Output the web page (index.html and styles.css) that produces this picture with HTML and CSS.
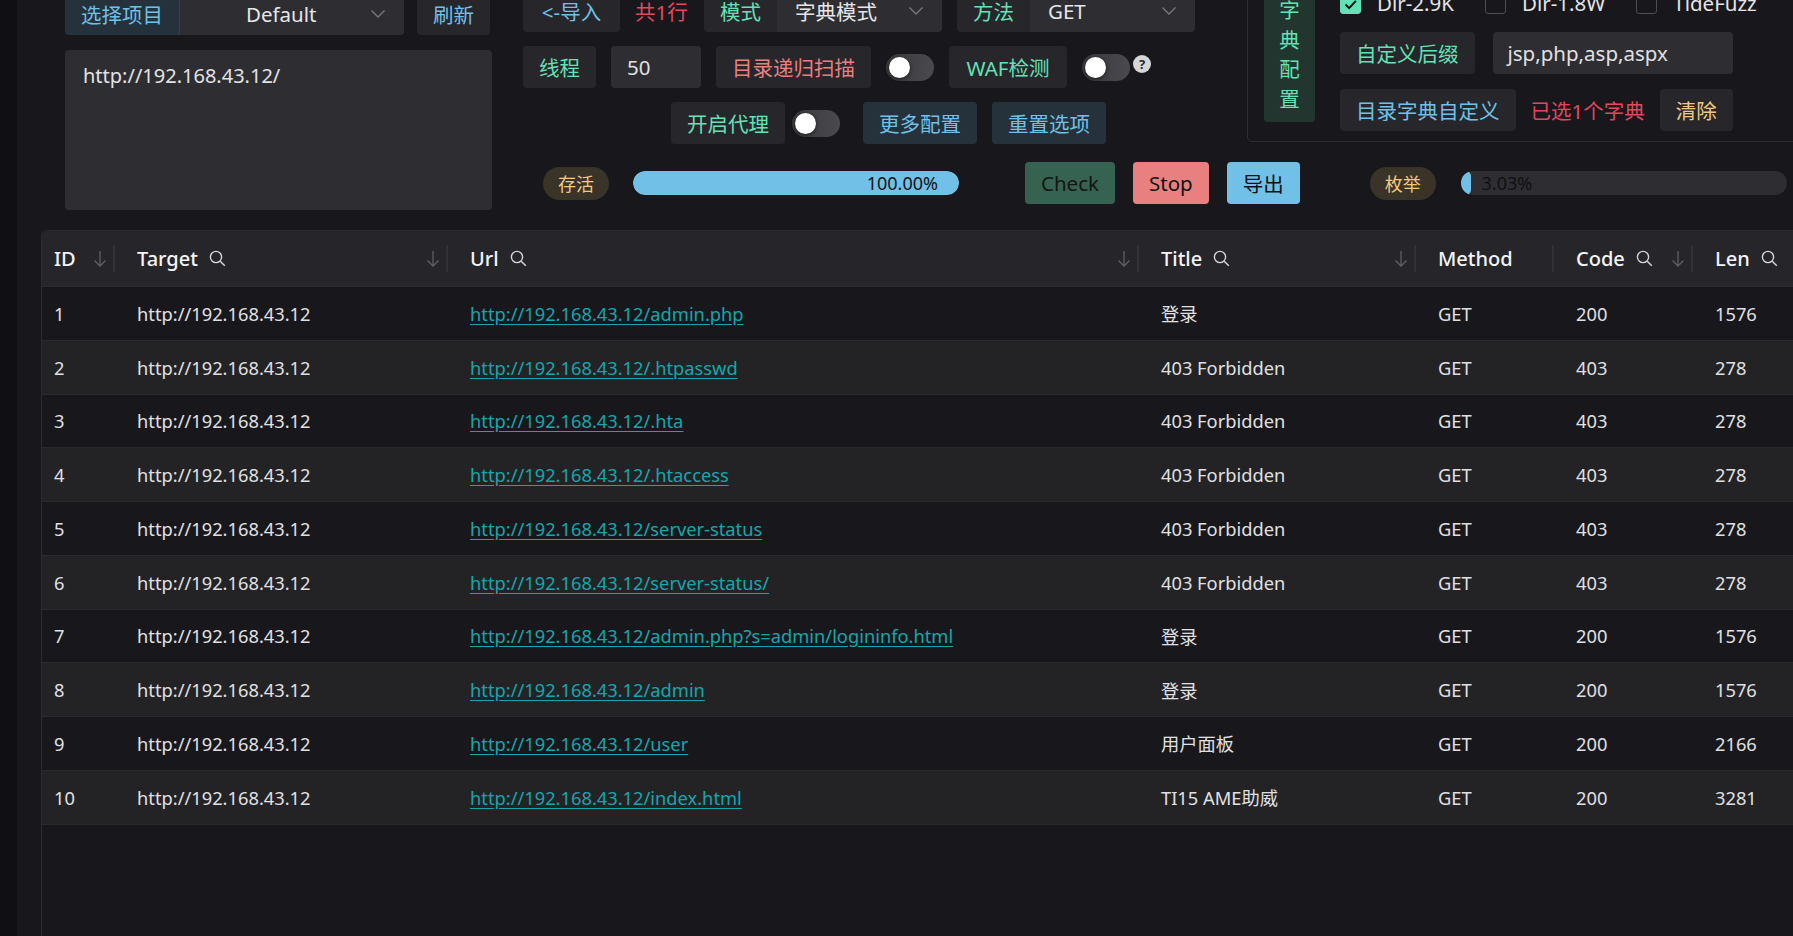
FILE: index.html
```html
<!DOCTYPE html>
<html lang="zh-CN">
<head>
<meta charset="utf-8">
<title>Dir Scan</title>
<link rel="stylesheet" href="styles.css">
</head>
<body>
<div class="app">
  <div class="strip"></div>
  <div class="main">
    <div class="top">
      <div class="left-col">
        <div class="ctl-row">
          <div class="group">
            <span class="btn tert-blue grp-l">选择项目</span>
            <div class="select sel-default grp-r"><span>Default</span><svg class="chev" width="16" height="10" viewBox="0 0 16 10"><path d="M1.5 1.5l6.5 6.5 6.5-6.5" fill="none" stroke="#77777c" stroke-width="1.4"/></svg></div>
          </div>
          <span class="btn sec c-blue">刷新</span>
        </div>
        <div class="textarea">http://192.168.43.12/</div>
      </div>

      <div class="right-area">
        <div class="upper">
          <div class="mid-col">
            <div class="row">
              <span class="btn sec c-blue btn-import">&lt;-导入</span>
              <span class="count count-rows c-rose">共1行</span>
              <div class="group">
                <span class="btn sec c-green grp-l">模式</span>
                <div class="select sel-mid grp-r"><span>字典模式</span><svg class="chev" width="16" height="10" viewBox="0 0 16 10"><path d="M1.5 1.5l6.5 6.5 6.5-6.5" fill="none" stroke="#77777c" stroke-width="1.4"/></svg></div>
              </div>
              <div class="group">
                <span class="btn sec c-green grp-l">方法</span>
                <div class="select sel-mid grp-r"><span>GET</span><svg class="chev" width="16" height="10" viewBox="0 0 16 10"><path d="M1.5 1.5l6.5 6.5 6.5-6.5" fill="none" stroke="#77777c" stroke-width="1.4"/></svg></div>
              </div>
            </div>
            <div class="row">
              <span class="btn sec c-green">线程</span>
              <div class="input-num">50</div>
              <span class="btn sec c-red">目录递归扫描</span>
              <div class="switch"><span class="knob"></span></div>
              <span class="btn sec c-green btn-waf">WAF检测</span>
              <div class="switch"><span class="knob"></span></div>
              <span class="help">?</span>
            </div>
            <div class="row r3">
              <span class="btn sec c-green">开启代理</span>
              <div class="switch sw-proxy"><span class="knob"></span></div>
              <span class="btn tert-blue">更多配置</span>
              <span class="btn tert-blue">重置选项</span>
            </div>
          </div>

          <div class="dict-box">
            <div class="dict-tag"><span>字</span><span>典</span><span>配</span><span>置</span></div>
            <div class="dict-content">
              <div class="cb-row">
                <label class="cb"><span class="cbox on"><svg width="21" height="21" viewBox="0 0 21 21"><path d="M5 10.5l4 4 7.5-8" fill="none" stroke="#111" stroke-width="2.2"/></svg></span>Dir-2.9K</label>
                <label class="cb"><span class="cbox"></span>Dir-1.8W</label>
                <label class="cb"><span class="cbox"></span>TideFuzz</label>
              </div>
              <div class="row gap18">
                <span class="btn sec c-green">自定义后缀</span>
                <div class="input-ext">jsp,php,asp,aspx</div>
              </div>
              <div class="row">
                <span class="btn sec c-blue">目录字典自定义</span>
                <span class="count c-rose">已选1个字典</span>
                <span class="btn sec c-yellow">清除</span>
              </div>
            </div>
          </div>
        </div>

        <div class="status-row">
          <span class="pill">存活</span>
          <div class="prog"><div class="prog-fill full">100.00%</div></div>
          <span class="btn btn-check">Check</span>
          <span class="btn btn-stop">Stop</span>
          <span class="btn btn-export">导出</span>
          <span class="pill pill-enum">枚举</span>
          <div class="prog prog-enum"><div class="prog-fill" style="width:3.03%"></div><span class="prog-text">3.03%</span></div>
        </div>
      </div>
    </div>

    <div class="table">
      <div class="thead">
        <div class="th sep">ID<svg class="sort" width="14" height="18" viewBox="0 0 14 18"><path d="M7 1v15M1.5 10.5L7 16l5.5-5.5" fill="none" stroke="#5e5e63" stroke-width="1.3"/></svg></div>
        <div class="th sep">Target<svg class="search" width="17" height="17" viewBox="0 0 17 17"><circle cx="7" cy="7" r="5.6" fill="none" stroke="#d4d4d6" stroke-width="1.4"/><path d="M11.2 11.2l4.6 4.6" stroke="#d4d4d6" stroke-width="1.5"/></svg><svg class="sort" width="14" height="18" viewBox="0 0 14 18"><path d="M7 1v15M1.5 10.5L7 16l5.5-5.5" fill="none" stroke="#5e5e63" stroke-width="1.3"/></svg></div>
        <div class="th sep">Url<svg class="search" width="17" height="17" viewBox="0 0 17 17"><circle cx="7" cy="7" r="5.6" fill="none" stroke="#d4d4d6" stroke-width="1.4"/><path d="M11.2 11.2l4.6 4.6" stroke="#d4d4d6" stroke-width="1.5"/></svg><svg class="sort" width="14" height="18" viewBox="0 0 14 18"><path d="M7 1v15M1.5 10.5L7 16l5.5-5.5" fill="none" stroke="#5e5e63" stroke-width="1.3"/></svg></div>
        <div class="th sep">Title<svg class="search" width="17" height="17" viewBox="0 0 17 17"><circle cx="7" cy="7" r="5.6" fill="none" stroke="#d4d4d6" stroke-width="1.4"/><path d="M11.2 11.2l4.6 4.6" stroke="#d4d4d6" stroke-width="1.5"/></svg><svg class="sort" width="14" height="18" viewBox="0 0 14 18"><path d="M7 1v15M1.5 10.5L7 16l5.5-5.5" fill="none" stroke="#5e5e63" stroke-width="1.3"/></svg></div>
        <div class="th sep">Method</div>
        <div class="th sep">Code<svg class="search" width="17" height="17" viewBox="0 0 17 17"><circle cx="7" cy="7" r="5.6" fill="none" stroke="#d4d4d6" stroke-width="1.4"/><path d="M11.2 11.2l4.6 4.6" stroke="#d4d4d6" stroke-width="1.5"/></svg><svg class="sort" width="14" height="18" viewBox="0 0 14 18"><path d="M7 1v15M1.5 10.5L7 16l5.5-5.5" fill="none" stroke="#5e5e63" stroke-width="1.3"/></svg></div>
        <div class="th">Len<svg class="search" width="17" height="17" viewBox="0 0 17 17"><circle cx="7" cy="7" r="5.6" fill="none" stroke="#d4d4d6" stroke-width="1.4"/><path d="M11.2 11.2l4.6 4.6" stroke="#d4d4d6" stroke-width="1.5"/></svg></div>
      </div>
      <div class="tbody">
        <div class="tr"><div class="td">1</div><div class="td">http://192.168.43.12</div><div class="td"><a href="#">http://192.168.43.12/admin.php</a></div><div class="td">登录</div><div class="td">GET</div><div class="td">200</div><div class="td">1576</div></div>
        <div class="tr"><div class="td">2</div><div class="td">http://192.168.43.12</div><div class="td"><a href="#">http://192.168.43.12/.htpasswd</a></div><div class="td">403 Forbidden</div><div class="td">GET</div><div class="td">403</div><div class="td">278</div></div>
        <div class="tr"><div class="td">3</div><div class="td">http://192.168.43.12</div><div class="td"><a href="#">http://192.168.43.12/.hta</a></div><div class="td">403 Forbidden</div><div class="td">GET</div><div class="td">403</div><div class="td">278</div></div>
        <div class="tr"><div class="td">4</div><div class="td">http://192.168.43.12</div><div class="td"><a href="#">http://192.168.43.12/.htaccess</a></div><div class="td">403 Forbidden</div><div class="td">GET</div><div class="td">403</div><div class="td">278</div></div>
        <div class="tr"><div class="td">5</div><div class="td">http://192.168.43.12</div><div class="td"><a href="#">http://192.168.43.12/server-status</a></div><div class="td">403 Forbidden</div><div class="td">GET</div><div class="td">403</div><div class="td">278</div></div>
        <div class="tr"><div class="td">6</div><div class="td">http://192.168.43.12</div><div class="td"><a href="#">http://192.168.43.12/server-status/</a></div><div class="td">403 Forbidden</div><div class="td">GET</div><div class="td">403</div><div class="td">278</div></div>
        <div class="tr"><div class="td">7</div><div class="td">http://192.168.43.12</div><div class="td"><a href="#">http://192.168.43.12/admin.php?s=admin/logininfo.html</a></div><div class="td">登录</div><div class="td">GET</div><div class="td">200</div><div class="td">1576</div></div>
        <div class="tr"><div class="td">8</div><div class="td">http://192.168.43.12</div><div class="td"><a href="#">http://192.168.43.12/admin</a></div><div class="td">登录</div><div class="td">GET</div><div class="td">200</div><div class="td">1576</div></div>
        <div class="tr"><div class="td">9</div><div class="td">http://192.168.43.12</div><div class="td"><a href="#">http://192.168.43.12/user</a></div><div class="td">用户面板</div><div class="td">GET</div><div class="td">200</div><div class="td">2166</div></div>
        <div class="tr"><div class="td">10</div><div class="td">http://192.168.43.12</div><div class="td"><a href="#">http://192.168.43.12/index.html</a></div><div class="td">TI15 AME助威</div><div class="td">GET</div><div class="td">200</div><div class="td">3281</div></div>
      </div>
    </div>
  </div>
</div>
</body>
</html>
```

FILE: styles.css
```css
html, body {
  margin: 0;
  height: 100%;
  overflow: hidden;
  background: #101014;
}
body {
  font-family: "Noto Sans", "Noto Sans CJK SC", sans-serif;
  color: #e0e0e2;
}
.app {
  display: flex;
  height: 936px;
}
.strip {
  width: 17px;
  flex: none;
  background: #101014;
}
.main {
  flex: 1;
  min-width: 0;
  background: #18181c;
  padding-left: 24px;
  overflow: hidden;
}

/* ---------- top controls ---------- */
.top {
  display: flex;
  margin-top: -10px;
  padding-left: 24px;
  height: 220px;
}
.left-col {
  width: 427px;
  flex: none;
  padding-top: 3px;
  display: flex;
  flex-direction: column;
  gap: 15px;
}
.ctl-row {
  display: flex;
  align-items: center;
  gap: 13px;
}
.group {
  display: flex;
  flex: none;
}
.btn {
  height: 42px;
  padding: 0 16px;
  box-sizing: border-box;
  border-radius: 4px;
  font-size: 20.5px;
  display: inline-flex;
  align-items: center;
  justify-content: center;
  white-space: nowrap;
  flex: none;
}
.sec { background: #27272b; }
.tert-blue { background: #25323c; color: #70c0e8; }
.c-blue { color: #70c0e8; }
.c-green { color: #63e2b7; }
.c-red { color: #e88080; }
.c-yellow { color: #f2c97d; }
.c-rose { color: #e2475e; }
.grp-l { border-radius: 4px 0 0 4px; }
.grp-r { border-radius: 0 4px 4px 0; }
.btn-import { width: 97px; }
.btn-waf { width: 118px; }

.select {
  height: 42px;
  box-sizing: border-box;
  background: #2e2e32;
  display: flex;
  align-items: center;
  font-size: 20.5px;
  color: #e6e6e8;
  white-space: nowrap;
}
.select .chev { margin-left: auto; flex: none; }
.sel-default {
  width: 225px;
  padding-left: 66px;
  padding-right: 18px;
  border-left: 1px solid #33404a;
}
.sel-mid {
  width: 165px;
  padding-left: 18px;
  padding-right: 18px;
}
.textarea {
  height: 160px;
  box-sizing: border-box;
  background: #2e2e32;
  border-radius: 4px;
  padding: 11px 18px;
  font-size: 20px;
  line-height: 30px;
  color: #e2e2e4;
}

.right-area {
  margin-left: 31px;
  flex: 1;
  min-width: 0;
  display: flex;
  flex-direction: column;
}
.upper {
  display: flex;
  height: 154px;
}
.mid-col {
  width: 724px;
  flex: none;
  display: flex;
  flex-direction: column;
  gap: 14px;
}
.row {
  display: flex;
  align-items: center;
  gap: 15px;
  height: 42px;
}
.gap18 { gap: 18px; }
.count {
  font-size: 20.5px;
  white-space: nowrap;
  flex: none;
}
.count-rows {
  width: 54px;
}
.input-num {
  width: 90px;
  height: 42px;
  box-sizing: border-box;
  background: #2e2e32;
  border-radius: 4px;
  padding-left: 16px;
  display: flex;
  align-items: center;
  font-size: 20.5px;
  color: #e0e0e2;
  flex: none;
}
.input-ext {
  width: 240px;
  height: 42px;
  box-sizing: border-box;
  background: #2e2e32;
  border-radius: 4px;
  padding-left: 15px;
  display: flex;
  align-items: center;
  font-size: 20.5px;
  color: #e0e0e2;
  flex: none;
}
.switch {
  width: 48px;
  height: 27px;
  box-sizing: border-box;
  border-radius: 14px;
  background: linear-gradient(90deg, #3a3a3e, #4a4a4e);
  display: flex;
  align-items: center;
  padding-left: 3px;
  flex: none;
}
.knob {
  width: 21px;
  height: 21px;
  border-radius: 50%;
  background: #fff;
  box-shadow: 0 1px 4px rgba(0, 0, 0, 0.6);
}
.help {
  width: 18px;
  height: 18px;
  border-radius: 50%;
  background: #d6d6d8;
  color: #26262a;
  font-size: 13px;
  font-weight: bold;
  display: flex;
  align-items: center;
  justify-content: center;
  align-self: flex-start;
  margin-top: 9px;
  margin-left: -12px;
  flex: none;
  line-height: 1;
}
.r3 {
  padding-left: 148px;
  gap: 0;
}
.r3 .sw-proxy { margin: 0 23px 0 7px; }
.r3 .tert-blue + .tert-blue { margin-left: 15px; }

/* dictionary box */
.dict-box {
  margin-top: -2px;
  width: 620px;
  flex: none;
  height: 154px;
  box-sizing: border-box;
  border: 1px solid #2e2e33;
  border-radius: 5px;
  padding: 0 0 10px 16px;
  display: flex;
  align-items: flex-end;
}
.dict-tag {
  width: 51px;
  flex: none;
  background: #22362f;
  color: #63e2b7;
  border-radius: 4px;
  font-size: 20.5px;
  line-height: 29.5px;
  padding: 4px 0 8px;
  margin: 0 25px 9px 0;
  display: flex;
  flex-direction: column;
  align-items: center;
}
.dict-content {
  display: flex;
  flex-direction: column;
  gap: 15px;
}
.cb-row {
  height: 28px;
  display: flex;
  align-items: center;
  gap: 31px;
}
.cb {
  display: flex;
  align-items: center;
  gap: 16px;
  font-size: 20.5px;
  color: #e4e4e6;
  white-space: nowrap;
}
.cbox {
  width: 21px;
  height: 21px;
  box-sizing: border-box;
  border: 1px solid #4c4c51;
  border-radius: 3px;
  display: flex;
}
.cbox.on {
  background: #63e2b7;
  border-color: #63e2b7;
}

/* status row */
.status-row {
  margin-top: 18px;
  height: 42px;
  display: flex;
  align-items: center;
  padding-left: 20px;
}
.pill {
  width: 66px;
  height: 33px;
  border-radius: 17px;
  background: #3a3327;
  color: #f2c97d;
  font-size: 18px;
  display: flex;
  align-items: center;
  justify-content: center;
  flex: none;
  margin-right: 24px;
}
.prog {
  width: 326px;
  height: 24px;
  border-radius: 12px;
  background: #2e2e32;
  display: flex;
  align-items: center;
  overflow: hidden;
  flex: none;
  margin-right: 66px;
}
.prog-fill {
  height: 100%;
  background: #70c0e8;
  border-radius: 12px;
  flex: none;
}
.prog-fill.full {
  width: 100%;
  box-sizing: border-box;
  display: flex;
  align-items: center;
  justify-content: flex-end;
  padding-right: 21px;
  font-size: 18px;
  color: #141416;
}
.prog-text {
  margin-left: 11px;
  font-size: 18px;
  color: #101012;
}
.btn-check { background: #366251; color: #121614; margin-right: 18px; }
.btn-stop { background: #e88080; color: #111; margin-right: 18px; }
.btn-export { background: #70c0e8; color: #111; margin-right: 70px; }
.pill-enum { margin-right: 25px; }
.prog-enum { margin-right: 0; }

/* ---------- table ---------- */
.table {
  margin-top: 20px;
  width: 1770px;
  height: 760px;
  border: 1px solid #2c2c30;
  border-right: none;
  border-radius: 6px 0 0 0;
  background: #18181c;
}
.thead, .tr {
  display: grid;
  grid-template-columns: 83px 333px 691px 277px 138px 139px 1fr;
}
.thead {
  height: 56px;
  box-sizing: border-box;
  background: #26262a;
  border-bottom: 1px solid #2c2c30;
  border-radius: 6px 0 0 0;
}
.th {
  position: relative;
  display: flex;
  align-items: center;
  padding: 0 12px;
  font-size: 20px;
  font-weight: 500;
  color: #f4f4f6;
  white-space: nowrap;
}
.th.sep::after {
  content: "";
  position: absolute;
  right: 10px;
  top: 14px;
  width: 2px;
  height: 27px;
  background: #313136;
}
.th .search { margin-left: 11px; flex: none; }
.th .sort { margin-left: auto; margin-right: 6px; flex: none; }
.tr {
  height: 53.75px;
  box-sizing: border-box;
  border-bottom: 1px solid #2a2a2e;
  background: #18181c;
}
.tr:nth-child(even) { background: #232326; }
.td {
  display: flex;
  align-items: center;
  padding: 0 12px;
  font-size: 18.3px;
  color: #e0e0e2;
  white-space: nowrap;
  overflow: hidden;
}
.td a {
  color: #15a6ad;
  text-decoration: underline;
  text-underline-offset: 3px;
}
```
